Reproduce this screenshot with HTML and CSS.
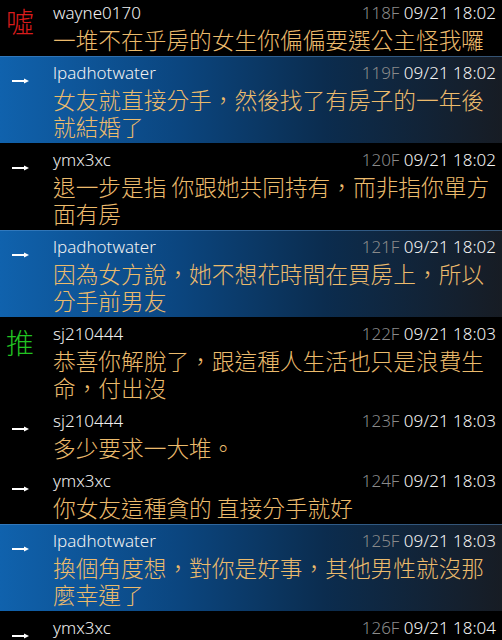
FILE: index.html
```html
<!DOCTYPE html>
<html lang="zh-Hant">
<head>
    <meta charset="UTF-8">
    <meta name="viewport" content="width=device-width, initial-scale=1.0">
    <title>推文</title>
    <link rel="stylesheet" href="styles.css">
</head>
<body>

    <div class="push-list">

        <div class="push first">
            <div class="tag boo">噓</div>
            <div class="push-body">
                <div class="push-head">
                    <span class="user">wayne0170</span>
                    <span class="meta"><span class="floor">118F</span> 09/21 18:02</span>
                </div>
                <div class="push-text">一堆不在乎房的女生你偏偏要選公主怪我囉</div>
            </div>
        </div>

        <div class="push op">
            <div class="tag"><svg class="arrow" viewBox="0 0 17 6"><path d="M0 3H13"/><polygon points="12,0.5 17,3 12,5.5"/></svg></div>
            <div class="push-body">
                <div class="push-head">
                    <span class="user">lpadhotwater</span>
                    <span class="meta"><span class="floor">119F</span> 09/21 18:02</span>
                </div>
                <div class="push-text">女友就直接分手，然後找了有房子的一年後就結婚了</div>
            </div>
        </div>

        <div class="push">
            <div class="tag"><svg class="arrow" viewBox="0 0 17 6"><path d="M0 3H13"/><polygon points="12,0.5 17,3 12,5.5"/></svg></div>
            <div class="push-body">
                <div class="push-head">
                    <span class="user">ymx3xc</span>
                    <span class="meta"><span class="floor">120F</span> 09/21 18:02</span>
                </div>
                <div class="push-text">退一步是指 你跟她共同持有，而非指你單方面有房</div>
            </div>
        </div>

        <div class="push op">
            <div class="tag"><svg class="arrow" viewBox="0 0 17 6"><path d="M0 3H13"/><polygon points="12,0.5 17,3 12,5.5"/></svg></div>
            <div class="push-body">
                <div class="push-head">
                    <span class="user">lpadhotwater</span>
                    <span class="meta"><span class="floor">121F</span> 09/21 18:02</span>
                </div>
                <div class="push-text">因為女方說，她不想花時間在買房上，所以分手前男友</div>
            </div>
        </div>

        <div class="push">
            <div class="tag good">推</div>
            <div class="push-body">
                <div class="push-head">
                    <span class="user">sj210444</span>
                    <span class="meta"><span class="floor">122F</span> 09/21 18:03</span>
                </div>
                <div class="push-text">恭喜你解脫了，跟這種人生活也只是浪費生命，付出沒</div>
            </div>
        </div>

        <div class="push">
            <div class="tag"><svg class="arrow" viewBox="0 0 17 6"><path d="M0 3H13"/><polygon points="12,0.5 17,3 12,5.5"/></svg></div>
            <div class="push-body">
                <div class="push-head">
                    <span class="user">sj210444</span>
                    <span class="meta"><span class="floor">123F</span> 09/21 18:03</span>
                </div>
                <div class="push-text">多少要求一大堆。</div>
            </div>
        </div>

        <div class="push">
            <div class="tag"><svg class="arrow" viewBox="0 0 17 6"><path d="M0 3H13"/><polygon points="12,0.5 17,3 12,5.5"/></svg></div>
            <div class="push-body">
                <div class="push-head">
                    <span class="user">ymx3xc</span>
                    <span class="meta"><span class="floor">124F</span> 09/21 18:03</span>
                </div>
                <div class="push-text">你女友這種貪的 直接分手就好</div>
            </div>
        </div>

        <div class="push op">
            <div class="tag"><svg class="arrow" viewBox="0 0 17 6"><path d="M0 3H13"/><polygon points="12,0.5 17,3 12,5.5"/></svg></div>
            <div class="push-body">
                <div class="push-head">
                    <span class="user">lpadhotwater</span>
                    <span class="meta"><span class="floor">125F</span> 09/21 18:03</span>
                </div>
                <div class="push-text">換個角度想，對你是好事，其他男性就沒那麼幸運了</div>
            </div>
        </div>

        <div class="push">
            <div class="tag"><svg class="arrow" viewBox="0 0 17 6"><path d="M0 3H13"/><polygon points="12,0.5 17,3 12,5.5"/></svg></div>
            <div class="push-body">
                <div class="push-head">
                    <span class="user">ymx3xc</span>
                    <span class="meta"><span class="floor">126F</span> 09/21 18:04</span>
                </div>
            </div>
        </div>

    </div>

</body>
</html>
```

FILE: styles.css
```css
/* Global styles */
html, body {
    margin: 0;
    padding: 0;
    background-color: #000;
    overflow: hidden;
}

body {
    font-family: 'Noto Sans', 'Noto Sans CJK TC', sans-serif;
    font-weight: 300;
    color: #f2f2f2;
}

/* Push rows */
.push {
    display: grid;
    grid-template-columns: 40px 1fr;
    column-gap: 13px;
    padding: 3px 6px 3px 0;
    background-color: #000;
}

.push.first {
    margin-top: -4px;
}

/* rows written by the original poster */
.push.op {
    background: linear-gradient(90deg, #1062ad 0%, #0b4680 35%, #0b2c4e 65%, #171c24 100%);
    box-shadow: inset 0 1px 0 rgba(90, 150, 210, 0.45);
}

.tag {
    margin-top: 7px;
    height: 30px;
    line-height: 30px;
    text-align: center;
    font-family: 'Noto Sans CJK TC', sans-serif;
    font-size: 28px;
    font-weight: 300;
    display: flex;
    align-items: center;
    justify-content: center;
}

.tag.boo {
    color: #d81c1c;
}

.tag.good {
    color: #22c422;
}

.arrow {
    width: 17px;
    height: 6px;
    margin-left: 1px;
}

.arrow path {
    stroke: #fff;
    stroke-width: 2;
    fill: none;
}

.arrow polygon {
    fill: #fff;
}

.push-head {
    display: flex;
    justify-content: space-between;
    align-items: center;
    height: 27px;
    font-size: 17px;
}

.user {
    color: #f0f0f0;
}

.meta {
    color: #f4f4f4;
    white-space: nowrap;
}

.floor {
    color: #8a8a8a;
}

.push-text {
    font-family: 'Noto Sans CJK TC', sans-serif;
    font-size: 22.7px;
    font-weight: 300;
    line-height: 27px;
    color: #ecbb6c;
}
```
